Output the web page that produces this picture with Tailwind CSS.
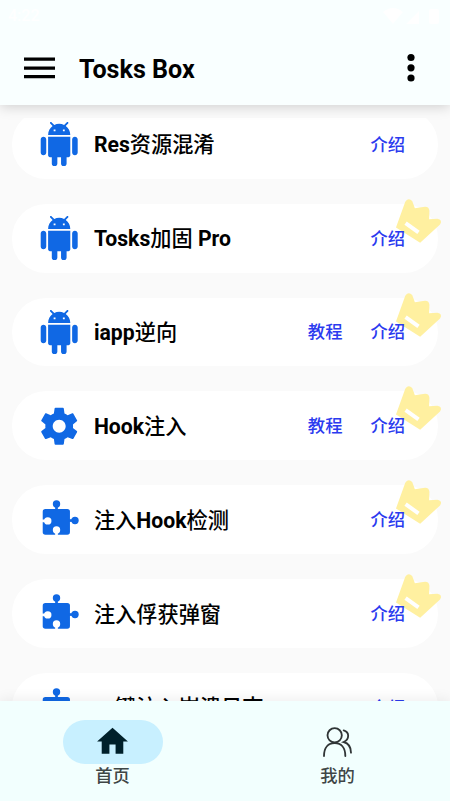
<!DOCTYPE html>
<html lang="zh-CN">
<head>
<meta charset="utf-8">
<title>Tosks Box</title>
<script src="https://cdn.jsdelivr.net/npm/@tailwindcss/browser@4"></script>
</head>
<body class="flex h-[801px] w-[450px] flex-col overflow-hidden bg-[#fafafa] font-['Roboto','Noto_Sans_CJK_SC',sans-serif] text-black">
<svg class="hidden">
  <symbol id="android" viewBox="0 0 24 24"><path d="M6 18c0 .55.45 1 1 1h1v3.500c0 .83.67 1.500 1.500 1.500s1.500-.67 1.500-1.500V19h2v3.500c0 .83.67 1.500 1.500 1.500s1.500-.67 1.500-1.500V19h1c.55 0 1-.45 1-1V8H6v10zM3.500 8C2.670 8 2 8.670 2 9.500v7c0 .83.67 1.500 1.500 1.500S5 17.330 5 16.500v-7C5 8.670 4.330 8 3.500 8zm17 0c-.83 0-1.500.67-1.500 1.500v7c0 .83.67 1.500 1.500 1.500s1.500-.67 1.500-1.500v-7c0-.83-.67-1.500-1.500-1.500zm-4.970-5.840l1.300-1.300c.2-.2.2-.51 0-.71-.2-.2-.51-.2-.71 0l-1.480 1.480C13.850 1.230 12.950 1 12 1c-.96 0-1.860.23-2.660.63L7.850.15c-.2-.2-.51-.2-.71 0-.2.2-.2.51 0 .71l1.310 1.310C6.970 3.260 6 5.010 6 7h12c0-1.990-.97-3.750-2.470-4.840zM10 5H9V4h1v1zm5 0h-1V4h1v1z"/></symbol>
  <symbol id="gear" viewBox="0 0 24 24"><path d="M19.430 12.980c.04-.32.07-.64.07-.98s-.03-.66-.07-.98l2.110-1.650c.19-.15.24-.42.12-.64l-2-3.460c-.12-.22-.39-.3-.61-.22l-2.490 1c-.52-.4-1.080-.73-1.690-.98l-.38-2.650C14.460 2.180 14.250 2 14 2h-4c-.25 0-.46.18-.49.42l-.38 2.650c-.61.25-1.170.59-1.690.98l-2.490-1c-.23-.09-.49 0-.61.22l-2 3.460c-.13.22-.07.49.12.64l2.110 1.650c-.04.32-.07.65-.07.98s.03.66.07.98l-2.110 1.650c-.19.15-.24.42-.12.64l2 3.460c.12.22.39.3.61.22l2.490-1c.52.4 1.080.73 1.690.98l.38 2.650c.03.24.24.42.49.42h4c.25 0 .46-.18.49-.42l.38-2.650c.61-.25 1.170-.59 1.690-.98l2.490 1c.23.09.49 0 .61-.22l2-3.460c.12-.22.07-.49-.12-.64l-2.110-1.650zM12 15.500c-1.930 0-3.500-1.570-3.500-3.500s1.570-3.500 3.500-3.500 3.500 1.570 3.500 3.500-1.570 3.500-3.500 3.500z"/></symbol>
  <symbol id="puzzle" viewBox="0 0 132 132">
    <rect x="17" y="36" width="81" height="76" rx="8"/>
    <circle cx="58" cy="21" r="11"/><rect x="54" y="26" width="8" height="14"/>
    <circle cx="113" cy="70" r="11"/><rect x="94" y="66" width="14" height="8"/>
    <g fill="#fff"><circle cx="32" cy="71" r="11"/><rect x="15" y="67" width="12" height="8"/><circle cx="58" cy="98" r="11"/><rect x="54" y="102" width="8" height="12"/></g>
  </symbol>
  <symbol id="crown" viewBox="45 20 145 145"><path fill="#fff0a0" d="M48 112L76 34Q86 20 97 32L105 54L130 50Q148 46 149 62L148 87L173 86Q190 90 181 103L121 158Z"/><path fill="none" stroke="#fff" stroke-width="12" d="M77 99L116 127"/></symbol>
</svg>

<header class="z-10 flex h-[105px] shrink-0 flex-col bg-[#f9ffff] shadow-[0_2px_12px_rgba(0,0,0,0.17)]">
  <div class="flex h-[31px] items-center justify-between pl-2 pr-2 text-[16px] font-medium text-white">
    <span>4:22</span>
    <svg width="60" height="18" viewBox="0 0 60 18" fill="#fff"><path d="M1 5Q11-3 21 5L11 17zM24 17L37 4V17z"/><rect x="47" y="2" width="10" height="15" rx="2"/></svg>
  </div>
  <div class="flex h-[74px] items-center pl-6 pr-[34px]">
    <svg class="mt-[-1px]" width="31" height="22" viewBox="0 0 31 22"><path d="M0 2.200H31M0 11.200H31M0 19.700H31" stroke="#000" stroke-width="3.300"/></svg>
    <h1 class="ml-6 flex-1 pt-[3px] text-[25.100px] leading-[30px] font-bold">Tosks Box</h1>
    <svg width="10" height="30" viewBox="0 0 10 30"><circle cx="5" cy="4.500" r="3.600"/><circle cx="5" cy="14.800" r="3.600"/><circle cx="5" cy="25" r="3.600"/></svg>
  </div>
</header>

<main class="mt-[12.500px] h-[583.500px] shrink-0 overflow-hidden pr-[12.500px] pl-[12px]">
  <div class="mt-[-7.600px] flex flex-col gap-[25.100px] text-[21.200px] leading-[28px] font-medium">
    <section class="relative flex h-[68.750px] shrink-0 items-center rounded-[34px] bg-white pl-[25px] pr-[32.500px]">
      <svg class="size-[44.400px] shrink-0 fill-[#1068e4]"><use href="#android"/></svg>
      <p class="ml-[12.500px] flex-1 pt-[2px]"><b>Res</b>资源混淆</p>
      <a class="pt-px text-[17.300px] text-[#2b3bef]">介绍</a>
    </section>
    <section class="relative flex h-[68.750px] shrink-0 items-center rounded-[34px] bg-white pl-[25px] pr-[32.500px]">
      <svg class="absolute top-[-7px] right-[-5px] size-[48px]"><use href="#crown"/></svg>
      <svg class="size-[44.400px] shrink-0 fill-[#1068e4]"><use href="#android"/></svg>
      <p class="ml-[12.500px] flex-1 pt-[2px]"><b>Tosks</b>加固<b> Pro</b></p>
      <a class="relative pt-px text-[17.300px] text-[#2b3bef]">介绍</a>
    </section>
    <section class="relative flex h-[68.750px] shrink-0 items-center rounded-[34px] bg-white pl-[25px] pr-[32.500px]">
      <svg class="absolute top-[-7px] right-[-5px] size-[48px]"><use href="#crown"/></svg>
      <svg class="size-[44.400px] shrink-0 fill-[#1068e4]"><use href="#android"/></svg>
      <p class="ml-[12.500px] flex-1 pt-[2px]"><b>iapp</b>逆向</p>
      <a class="mr-[28px] pt-px text-[17.300px] text-[#2b3bef]">教程</a>
      <a class="relative pt-px text-[17.300px] text-[#2b3bef]">介绍</a>
    </section>
    <section class="relative flex h-[68.750px] shrink-0 items-center rounded-[34px] bg-white pl-[25px] pr-[32.500px]">
      <svg class="absolute top-[-7px] right-[-5px] size-[48px]"><use href="#crown"/></svg>
      <svg class="size-[44.400px] shrink-0 fill-[#1068e4]"><use href="#gear"/></svg>
      <p class="ml-[12.500px] flex-1 pt-[2px]"><b>Hook</b>注入</p>
      <a class="mr-[28px] pt-px text-[17.300px] text-[#2b3bef]">教程</a>
      <a class="relative pt-px text-[17.300px] text-[#2b3bef]">介绍</a>
    </section>
    <section class="relative flex h-[68.750px] shrink-0 items-center rounded-[34px] bg-white pl-[25px] pr-[32.500px]">
      <svg class="absolute top-[-7px] right-[-5px] size-[48px]"><use href="#crown"/></svg>
      <svg class="size-[44.400px] shrink-0 fill-[#1068e4]"><use href="#puzzle"/></svg>
      <p class="ml-[12.500px] flex-1 pt-[2px]">注入<b>Hook</b>检测</p>
      <a class="relative pt-px text-[17.300px] text-[#2b3bef]">介绍</a>
    </section>
    <section class="relative flex h-[68.750px] shrink-0 items-center rounded-[34px] bg-white pl-[25px] pr-[32.500px]">
      <svg class="absolute top-[-7px] right-[-5px] size-[48px]"><use href="#crown"/></svg>
      <svg class="size-[44.400px] shrink-0 fill-[#1068e4]"><use href="#puzzle"/></svg>
      <p class="ml-[12.500px] flex-1 pt-[2px]">注入俘获弹窗</p>
      <a class="relative pt-px text-[17.300px] text-[#2b3bef]">介绍</a>
    </section>
    <section class="relative flex h-[68.750px] shrink-0 items-center rounded-[34px] bg-white pl-[25px] pr-[32.500px]">
      <svg class="size-[44.400px] shrink-0 fill-[#1068e4]"><use href="#puzzle"/></svg>
      <p class="ml-[12.500px] flex-1 pt-[2px]">一键注入崩溃日志</p>
      <a class="pt-px text-[17.300px] text-[#2b3bef]">介绍</a>
    </section>
  </div>
</main>

<nav class="z-10 grid h-[100px] shrink-0 grid-cols-2 bg-[#f2fffe] pt-[19px] text-[17.300px] leading-[24px] font-medium text-[#3f4646] shadow-[0_0_14px_rgba(0,0,0,0.09)]">
  <a class="flex flex-col items-center">
    <span class="flex h-[43.500px] w-[100px] items-center justify-center rounded-full bg-[#c8f0ff]"><svg class="size-[37px] fill-[#00202a]" viewBox="0 0 24 24"><path d="M10 20v-6h4v6h5v-8h3L12 3 2 12h3v8z"/></svg></span>
    <span>首页</span>
  </a>
  <a class="flex flex-col items-center">
    <span class="flex h-[43.500px] w-[100px] items-center justify-center"><svg class="size-[32px]" viewBox="156 199 96 96" fill="none" stroke="#303536" stroke-width="5.500" stroke-linecap="round"><circle cx="194" cy="227" r="21.500"/><path d="M162 289C162 263 175 250 194 250S226 263 226 289M221 212C239 217 239 239 221 247C235 251 243 263 243 279"/></svg></span>
    <span>我的</span>
  </a>
</nav>
</body>
</html>
